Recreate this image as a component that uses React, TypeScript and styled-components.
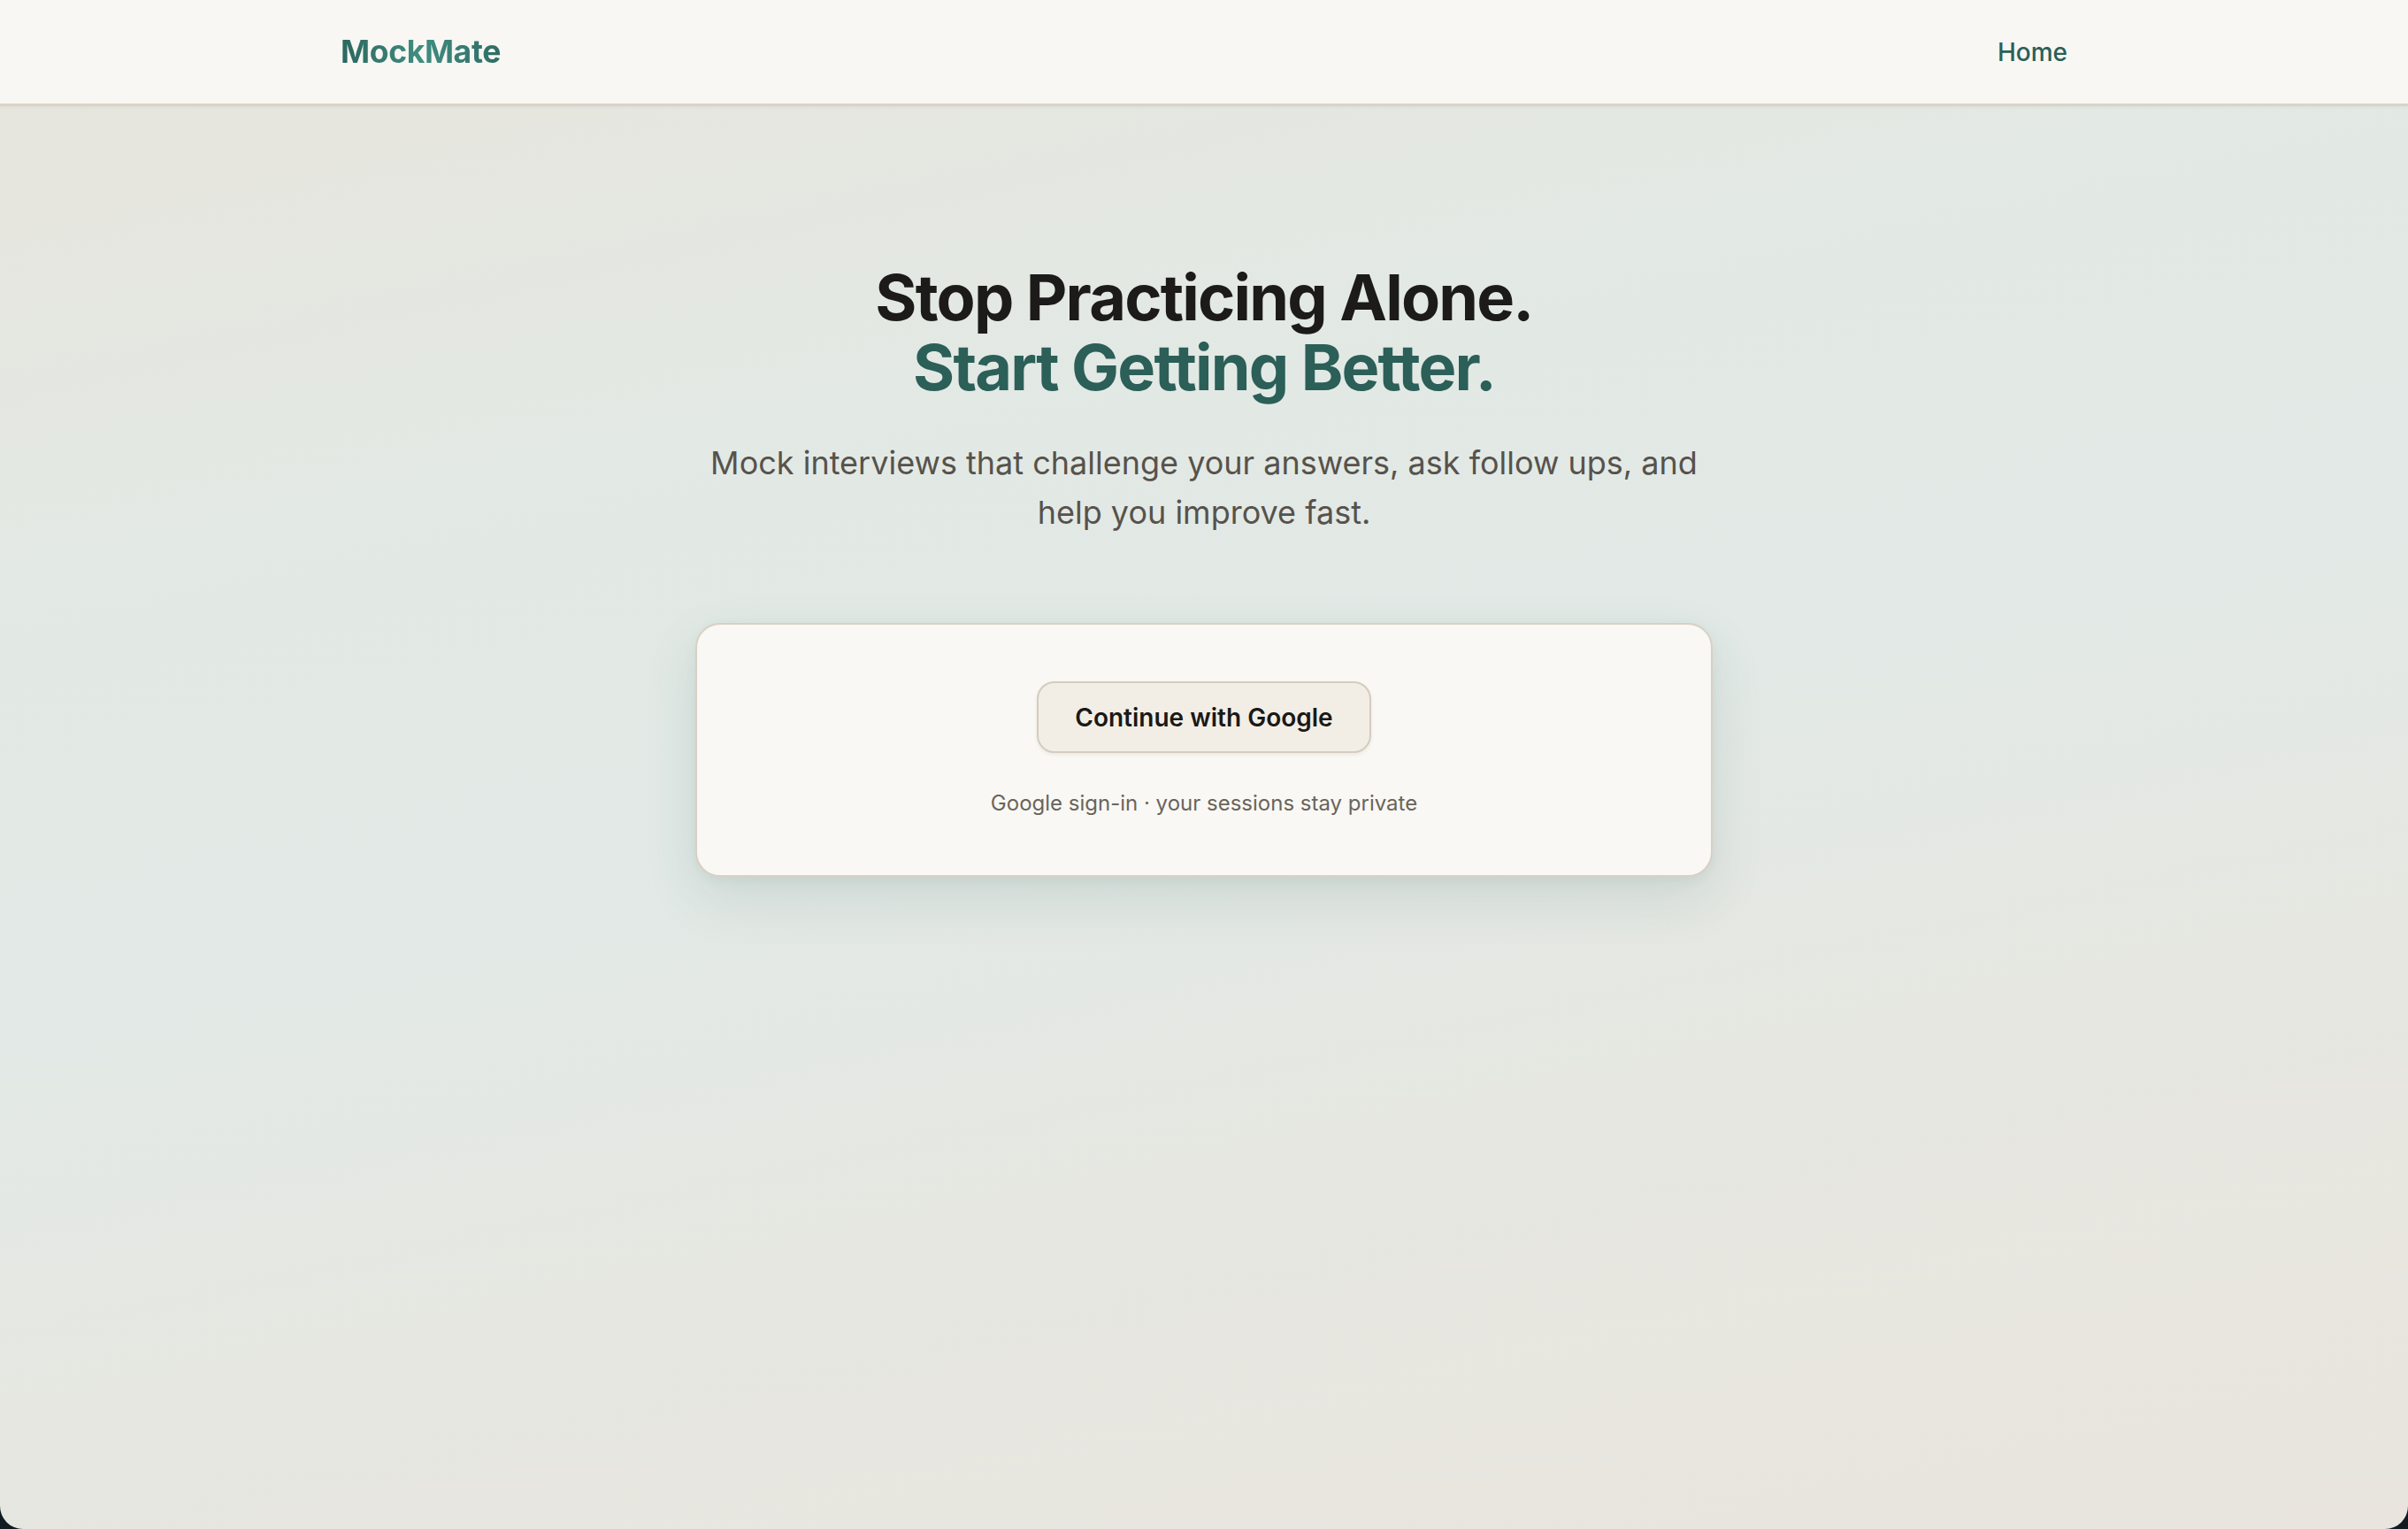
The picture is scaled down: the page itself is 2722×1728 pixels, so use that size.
import React from "react";
import styled, { createGlobalStyle } from "styled-components";

const GlobalStyle = createGlobalStyle`
  html, body {
    margin: 0;
    padding: 0;
    background: #121a22;
  }
  body {
    font-family: Inter, "Noto Sans", "Liberation Sans", sans-serif;
    -webkit-font-smoothing: antialiased;
  }
  * { box-sizing: border-box; }
`;

const Page = styled.div`
  min-height: 100vh;
  display: flex;
  flex-direction: column;
  background: linear-gradient(168deg, #e8e5dc 0%, #e2e9e5 32%, #e2e9e6 50%, #e6e7e1 70%, #e9e5de 100%);
  border-radius: 0 0 26px 26px;
  overflow: hidden;
`;

const Header = styled.header`
  height: 120px;
  flex-shrink: 0;
  background: #f8f7f3;
  border-bottom: 3px solid #dbd3c7;
  box-shadow: 0 1px 4px rgba(60, 50, 30, 0.06);
`;

const HeaderInner = styled.div`
  max-width: 1952px;
  height: 100%;
  margin: 0 auto;
  display: flex;
  align-items: center;
  justify-content: space-between;
`;

const Logo = styled.a`
  font-size: 35.5px;
  font-weight: 700;
  letter-spacing: -0.01em;
  background: linear-gradient(90deg, #2c675e 0%, #3f8d81 50%, #2f6d65 100%);
  -webkit-background-clip: text;
  background-clip: text;
  color: transparent;
  text-decoration: none;
  line-height: 1;
`;

const NavLink = styled.a`
  font-size: 28px;
  font-weight: 500;
  color: #2b5f58;
  text-decoration: none;
`;

const Main = styled.main`
  flex: 1;
  display: flex;
  flex-direction: column;
  align-items: center;
  padding-top: 176px;
`;

const Headline = styled.h1`
  margin: 0;
  font-size: 72px;
  line-height: 1.1;
  font-weight: 700;
  letter-spacing: -0.025em;
  text-align: center;
  color: #1c1b19;
`;

const Accent = styled.span`
  display: block;
  color: #2b5f58;
`;

const Lead = styled.p`
  margin: 41px 0 0;
  max-width: 1160px;
  font-size: 36px;
  line-height: 56px;
  font-weight: 400;
  color: #57524b;
  text-align: center;
`;

const Card = styled.section`
  margin-top: 97px;
  width: 1150px;
  padding: 64px 40px 64px;
  display: flex;
  flex-direction: column;
  align-items: center;
  background: #f9f8f4;
  border: 2px solid #d8d0c4;
  border-radius: 28px;
  box-shadow: 0 24px 60px rgba(40, 90, 80, 0.12), 0 4px 14px rgba(40, 90, 80, 0.06);
`;

const GoogleButton = styled.button`
  height: 81px;
  padding: 0 41px;
  font-family: inherit;
  font-size: 28px;
  font-weight: 600;
  color: #1a1917;
  background: #f2eee6;
  border: 2px solid #d4ccbf;
  border-radius: 20px;
  box-shadow: 0 2px 4px rgba(60, 50, 30, 0.08);
  cursor: pointer;
`;

const Caption = styled.p`
  margin: 40px 0 0;
  font-size: 24px;
  line-height: 34px;
  color: #6a645c;
`;

export default function App() {
  return (
    <>
      <GlobalStyle />
      <Page>
        <Header>
          <HeaderInner>
            <Logo href="#">MockMate</Logo>
            <NavLink href="#">Home</NavLink>
          </HeaderInner>
        </Header>
        <Main>
          <Headline>
            Stop Practicing Alone.
            <Accent>Start Getting Better.</Accent>
          </Headline>
          <Lead>
            Mock interviews that challenge your answers, ask follow ups, and help you improve fast.
          </Lead>
          <Card>
            <GoogleButton>Continue with Google</GoogleButton>
            <Caption>Google sign-in · your sessions stay private</Caption>
          </Card>
        </Main>
      </Page>
    </>
  );
}
